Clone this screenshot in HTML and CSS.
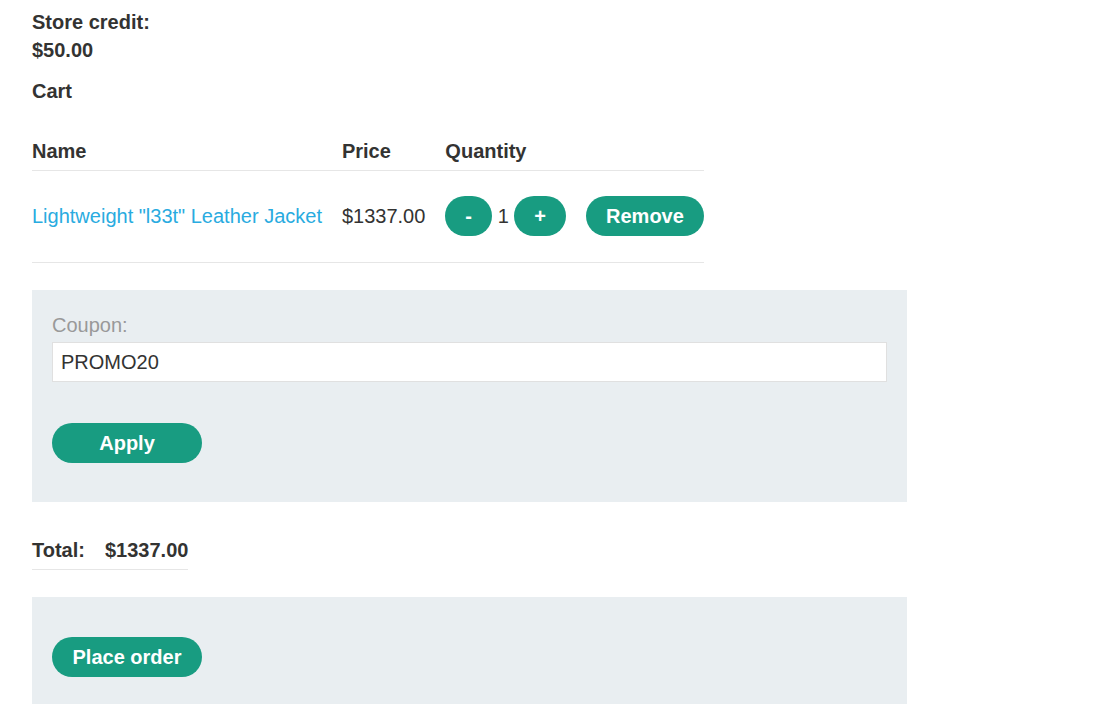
FILE: index.html
```html
<!DOCTYPE html>
<html lang="en">
<head>
<meta charset="utf-8">
<title>Cart</title>
<link rel="stylesheet" href="styles.css">
</head>
<body>
<div class="page">
  <p class="credit"><strong>Store credit:</strong><strong>$50.00</strong></p>
  <p class="cart-title"><strong>Cart</strong></p>
  <table class="cart-table">
    <thead>
      <tr><th>Name</th><th>Price</th><th>Quantity</th><th></th></tr>
    </thead>
    <tbody>
      <tr>
        <td><a class="product-link" href="#">Lightweight "l33t" Leather Jacket</a></td>
        <td>$1337.00</td>
        <td>
          <div class="qty">
            <button class="btn" type="button">-</button>
            <span class="qty-num">1</span>
            <button class="btn" type="button">+</button>
          </div>
        </td>
        <td><button class="btn" type="button">Remove</button></td>
      </tr>
    </tbody>
  </table>

  <form class="panel coupon-panel">
    <label class="coupon-label" for="coupon">Coupon:</label>
    <input class="coupon-input" id="coupon" type="text" value="PROMO20">
    <button class="btn btn-wide apply-btn" type="button">Apply</button>
  </form>

  <table class="total-table">
    <tr><th>Total:</th><th>$1337.00</th></tr>
  </table>

  <form class="panel order-panel">
    <button class="btn btn-wide" type="button">Place order</button>
  </form>
</div>
</body>
</html>
```

FILE: styles.css
```css
html, body {
  margin: 0;
  padding: 0;
  background: #ffffff;
}

body {
  font-family: "Liberation Sans", Arial, sans-serif;
  font-size: 20px;
  line-height: 28px;
  color: #333332;
}

.page {
  width: 875px;
  padding: 8px 32px 0;
}

.credit {
  margin: 0;
}

.credit strong {
  display: block;
}

.cart-title {
  margin: 13px 0 0;
}

.cart-table {
  margin-top: 32px;
  border-collapse: collapse;
  border-spacing: 0;
}

.cart-table th {
  text-align: left;
  font-weight: bold;
  padding: 0 0 5px 20px;
  border-bottom: 1px solid #e6e6e6;
  white-space: nowrap;
}

.cart-table td {
  padding: 25px 0 26px 20px;
  border-bottom: 1px solid #e6e6e6;
  vertical-align: middle;
  white-space: nowrap;
}

.cart-table th:first-child,
.cart-table td:first-child {
  padding-left: 0;
}

.product-link {
  color: #29abe0;
  text-decoration: none;
}

.qty {
  display: flex;
  align-items: center;
}

.qty-num {
  padding: 0 5.6px;
}

.btn {
  display: inline-block;
  box-sizing: border-box;
  height: 40px;
  padding: 0 20px;
  border: 0;
  border-radius: 20px;
  background: #189c81;
  color: #ffffff;
  font-family: "Liberation Sans", Arial, sans-serif;
  font-size: 20px;
  font-weight: bold;
  line-height: 40px;
  cursor: pointer;
  vertical-align: middle;
}

.btn-wide {
  min-width: 150px;
}

.panel {
  display: block;
  margin: 27px 0 0;
  background: #e9eef1;
}

.coupon-panel {
  padding: 21px 20px 39px;
}

.coupon-label {
  display: block;
  color: #999999;
}

.coupon-input {
  display: block;
  box-sizing: border-box;
  width: 100%;
  height: 40px;
  margin-top: 3px;
  padding: 0 8px;
  border: 1px solid #e0e0e0;
  background: #ffffff;
  font-family: "Liberation Sans", Arial, sans-serif;
  font-size: 20px;
  color: #333332;
  outline: none;
}

.apply-btn {
  display: block;
  margin-top: 41px;
}

.total-table {
  margin-top: 34px;
  border-collapse: collapse;
  border-spacing: 0;
}

.total-table th {
  text-align: left;
  padding: 0 0 5px 20px;
  border-bottom: 1px solid #e6e6e6;
  white-space: nowrap;
}

.total-table th:first-child {
  padding-left: 0;
}

.order-panel {
  padding: 40px 20px 40px;
}
```
